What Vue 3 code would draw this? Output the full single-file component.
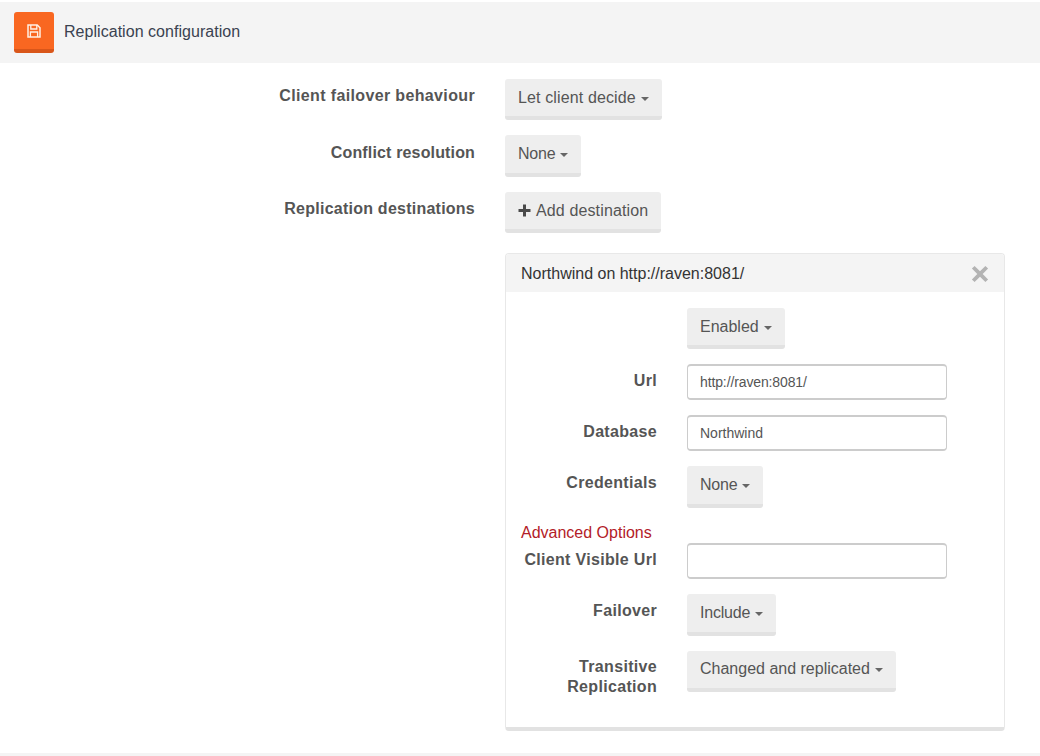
<template>
  <div class="page">
    <div class="topbar">
      <button class="save-btn" type="button" title="Save">
        <svg width="14" height="14" viewBox="0 0 14 14" fill="none" stroke="#fff0e4">
          <path d="M1 1h9.200L13 3.800V13H1z" stroke-width="1.500" />
          <path d="M3.800 1v4h6V1" stroke-width="1.300" />
          <path d="M3.400 13V8h7.200v5" stroke-width="1.300" />
        </svg>
      </button>
      <span class="title">Replication configuration</span>
    </div>

    <div class="form">
      <div class="row" v-for="row in topRows" :key="row.label">
        <label class="lbl" :class="row.lblFit">{{ row.label }}</label>
        <button class="btn" :class="row.fit" type="button">
          <svg v-if="row.plus" class="plus" width="13" height="13" viewBox="0 0 13 13">
            <path d="M5 .5h3v4.500h4.500v3H8v4.500H5V8H.5V5H5z" fill="#4a4a4a" />
          </svg>
          {{ row.text }}<span v-if="!row.plus" class="caret"></span>
        </button>
      </div>

      <div class="panel">
        <div class="panel-head">
          <span class="panel-title">Northwind on http://raven:8081/</span>
          <svg class="close" width="18" height="18" viewBox="0 0 16 16">
            <path d="M3.200.8 8 5.600 12.800.8l2.400 2.400L10.400 8l4.800 4.800-2.400 2.400L8 10.400l-4.800 4.800-2.400-2.400L5.600 8 .8 3.200z" fill="#b3b3b3" />
          </svg>
        </div>
        <div class="panel-body">
          <div class="sub-row">
            <span class="sub-lbl"></span>
            <button class="btn" type="button">Enabled<span class="caret"></span></button>
          </div>
          <div class="sub-row">
            <label class="sub-lbl">Url</label>
            <input class="field url" type="text" value="http://raven:8081/" />
          </div>
          <div class="sub-row">
            <label class="sub-lbl">Database</label>
            <input class="field" type="text" value="Northwind" />
          </div>
          <div class="sub-row">
            <label class="sub-lbl">Credentials</label>
            <button class="btn tight" type="button">None<span class="caret"></span></button>
          </div>
          <div class="advanced">Advanced Options</div>
          <div class="sub-row">
            <label class="sub-lbl">Client Visible Url</label>
            <input class="field" type="text" />
          </div>
          <div class="sub-row">
            <label class="sub-lbl">Failover</label>
            <button class="btn tight" type="button">Include<span class="caret"></span></button>
          </div>
          <div class="sub-row">
            <label class="sub-lbl two-line">Transitive Replication</label>
            <button class="btn" type="button">Changed and replicated<span class="caret"></span></button>
          </div>
        </div>
      </div>
    </div>
    <div class="bottom-band"></div>
  </div>
</template>

<script setup>
const topRows = [
  { label: 'Client failover behaviour', text: 'Let client decide', fit: 'wide' },
  { label: 'Conflict resolution', text: 'None', fit: 'tight', lblFit: 'lbl-narrow' },
  { label: 'Replication destinations', text: 'Add destination', plus: true, fit: 'wide', lblFit: 'lbl-mid' }
]
</script>

<style scoped>
.page {
  height: 756px;
  overflow: hidden;
  padding-top: 2px;
  box-sizing: border-box;
  background: #fff;
  color: #555;
  font-family: "Liberation Sans", Arial, sans-serif;
  font-size: 16px;
  display: flex;
  flex-direction: column;
}

.topbar {
  height: 61px;
  flex: none;
  background: #f4f4f4;
  display: flex;
  align-items: center;
  padding-left: 14px;
  box-sizing: border-box;
}

.save-btn {
  width: 40px;
  height: 41px;
  border: 0;
  border-bottom: 4px solid #d9561a;
  border-radius: 3px;
  background: #f96721;
  padding: 0;
  display: flex;
  align-items: center;
  justify-content: center;
}

.title {
  margin-left: 10px;
  margin-top: -2px;
  font-size: 16px;
  letter-spacing: .04px;
  color: #3a4250;
}

.form {
  padding: 15.9px 0 0 0;
  flex: 1;
}

.row {
  display: flex;
  margin-bottom: 15px;
}

.lbl {
  width: 475px;
  flex: none;
  text-align: right;
  font-weight: bold;
  letter-spacing: .36px;
  padding-top: 8.2px;
  line-height: 18px;
}

.lbl-narrow {
  letter-spacing: .15px;
}

.lbl-mid {
  letter-spacing: .24px;
}

.btn {
  margin-left: 30px;
  height: 41.6px;
  padding: 0 13px;
  border: 0;
  border-bottom: 4px solid #e2e2e2;
  border-radius: 3px;
  background: #eee;
  color: #555;
  font-family: inherit;
  font-size: 16px;
  display: inline-flex;
  align-items: center;
  white-space: nowrap;
}

.row .btn {
  height: 41.5px;
}

.wide {
  letter-spacing: .13px;
}

.tight {
  letter-spacing: -.2px;
}

.plus {
  margin-right: 5px;
}

.caret {
  width: 0;
  height: 0;
  margin-left: 5px;
  margin-top: 2px;
  border-top: 4px solid #666;
  border-left: 4px solid transparent;
  border-right: 4px solid transparent;
}

.panel {
  width: 500px;
  height: 478px;
  margin: 19.4px 0 0 505px;
  box-sizing: border-box;
  border: 1px solid #e8e8e8;
  border-bottom: 4px solid #e2e2e2;
  border-radius: 4px;
  background: #fff;
  overflow: hidden;
}

.panel-head {
  height: 38px;
  background: #f4f4f4;
  padding: 0 15px 0 15px;
  display: flex;
  align-items: center;
  justify-content: space-between;
  color: #333;
}

.panel-title {
  margin-top: 2px;
}

.close {
  margin-top: 3px;
}

.panel-body {
  padding-top: 16px;
}

.sub-row {
  display: flex;
  margin-bottom: 15px;
}

.sub-lbl {
  width: 151px;
  flex: none;
  text-align: right;
  font-weight: bold;
  letter-spacing: .32px;
  padding-top: 7px;
  line-height: 20px;
}

.two-line {
  padding-top: 6px;
}

.field {
  width: 260px;
  height: 36px;
  margin-left: 30px;
  box-sizing: border-box;
  border: 1px solid #ccc;
  border-top-width: 2px;
  border-bottom-width: 2px;
  border-radius: 4px;
  padding: 0 12px;
  color: #555;
  font-family: inherit;
  font-size: 14px;
  outline: none;
}

.url {
  letter-spacing: -.12px;
}

.advanced {
  margin: -1px 0 0 15px;
  height: 21px;
  line-height: 21px;
  color: #b32028;
}

.bottom-band {
  height: 3px;
  flex: none;
  background: #f4f4f4;
}
</style>
